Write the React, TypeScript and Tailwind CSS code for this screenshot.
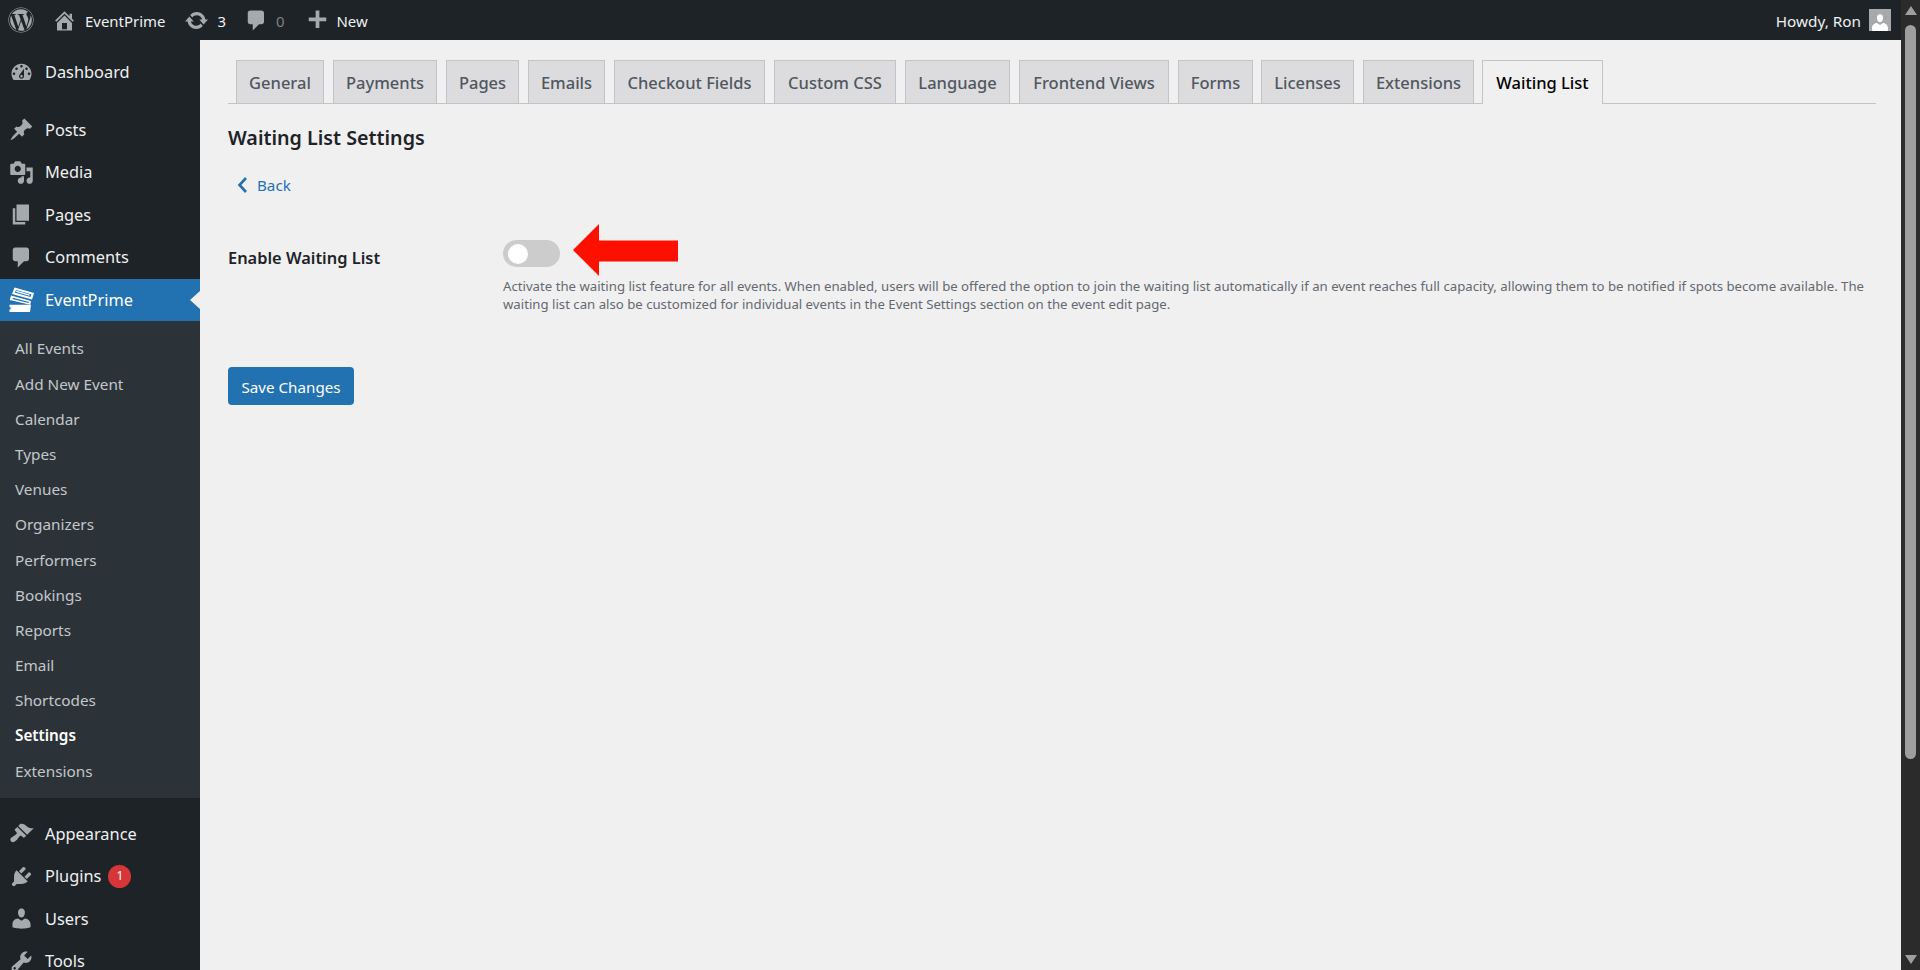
import { FaWordpress } from "react-icons/fa";

const F = "font-['Noto_Sans',sans-serif]";

const P = {
  dashboard: "M3.76 16h12.48c1.1-1.37 1.76-3.11 1.76-5 0-4.42-3.58-8-8-8s-8 3.58-8 8c0 1.89.66 3.63 1.76 5zM10 4c.55 0 1 .45 1 1s-.45 1-1 1-1-.45-1-1 .45-1 1-1zM6 6c.55 0 1 .45 1 1s-.45 1-1 1-1-.45-1-1 .45-1 1-1zm8 0c.55 0 1 .45 1 1s-.45 1-1 1-1-.45-1-1 .45-1 1-1zm-5.37 5.55L12 7v6c0 1.1-.9 2-2 2s-2-.9-2-2c0-.57.24-1.08.63-1.45zM4 10c.55 0 1 .45 1 1s-.45 1-1 1-1-.45-1-1 .45-1 1-1zm12 0c.55 0 1 .45 1 1s-.45 1-1 1-1-.45-1-1 .45-1 1-1zm-5 3c0-.55-.45-1-1-1s-1 .45-1 1 .45 1 1 1 1-.45 1-1z",
  post: "M10.44 3.02l1.82-1.82 6.36 6.35-1.83 1.82c-1.05-.68-2.48-.57-3.41.36l-.75.75c-.92.93-1.04 2.35-.35 3.41l-1.83 1.82-2.41-2.41-2.8 2.79c-.42.42-3.38 2.71-3.8 2.29s1.86-3.39 2.28-3.81l2.79-2.79L4.1 9.36l1.83-1.82c1.05.69 2.48.57 3.4-.36l.75-.75c.93-.92 1.05-2.35.36-3.41z",
  media: "M13 11V4c0-.55-.45-1-1-1h-1.67L9 1H5L3.67 3H2c-.55 0-1 .45-1 1v7c0 .55.45 1 1 1h10c.55 0 1-.45 1-1zM7 4.5c1.38 0 2.5 1.12 2.5 2.5S8.38 9.5 7 9.5 4.5 8.38 4.5 7 5.62 4.5 7 4.5zM14 6h5v10.5c0 1.38-1.12 2.5-2.5 2.5S14 17.88 14 16.5s1.12-2.5 2.5-2.5c.17 0 .34.02.5.05V9h-3V6zm-4 8.05V13h2v3.5c0 1.38-1.12 2.5-2.5 2.5S7 17.88 7 16.5 8.12 14 9.5 14c.17 0 .34.02.5.05z",
  page: "M6 15V2h10v13H6zm-1 1h8v2H3V5h2v11z",
  comment: "M5 2h9c1.1 0 2 .9 2 2v7c0 1.1-.9 2-2 2h-2l-5 5v-5H5c-1.1 0-2-.9-2-2V4c0-1.1.9-2 2-2z",
  appearance: "M14.48 11.06L7.41 3.99l1.5-1.5c.5-.56 2.3-.47 3.51.32 1.21.8 1.43 1.28 2.91 2.1 1.18.64 2.45 1.26 4.45.85zm-.71.71L6.7 4.7 4.93 6.47c-.39.39-.39 1.02 0 1.41l1.06 1.06c.39.39.39 1.03 0 1.42-.6.6-1.43 1.11-2.21 1.69-.35.26-.7.53-1.01.84C1.43 13.23.4 14.98 1.72 16.3c1.33 1.33 3.08.3 4.42-1.05.31-.31.58-.66.84-1.01.58-.78 1.09-1.61 1.69-2.21.39-.39 1.02-.39 1.41 0l1.06 1.06c.39.39 1.02.39 1.41 0z",
  plugin: "M13.11 4.36L9.87 7.6 8 5.73l3.24-3.24c.35-.34 1.05-.2 1.56.32.52.51.66 1.21.31 1.55zm-8 1.77l.91-1.12 9.01 9.01-1.19.84c-.71.71-2.63 1.16-3.82 1.16H6.14L4.9 17.26c-.59.59-1.54.59-2.12 0-.59-.58-.59-1.53 0-2.12l1.24-1.24v-3.88c0-1.13.4-3.19 1.09-3.89zm7.26 3.97l3.24-3.24c.34-.35 1.04-.21 1.55.31.52.51.66 1.21.31 1.55l-3.24 3.25z",
  users: "M10 9.25c-2.27 0-2.73-3.44-2.73-3.44C7 4.02 7.82 2 9.97 2c2.16 0 2.98 2.02 2.71 3.81 0 0-.41 3.44-2.68 3.44zm0 2.57L12.72 10c2.39 0 4.52 2.33 4.52 4.53v2.49s-3.65 1.13-7.24 1.13c-3.65 0-7.24-1.13-7.24-1.13v-2.49c0-2.25 1.94-4.48 4.47-4.48z",
  tools: "M16.68 9.77c-1.34 1.34-3.3 1.67-4.95.99l-5.41 6.52c-.99.99-2.59.99-3.58 0s-.99-2.59 0-3.57l6.52-5.42c-.68-1.65-.35-3.61.99-4.95 1.28-1.28 3.12-1.62 4.72-1.06l-2.89 2.89 2.82 2.82 2.86-2.87c.53 1.58.18 3.39-1.08 4.65zM3.81 16.21c.4.39 1.04.39 1.43 0 .4-.4.4-1.04 0-1.43-.39-.4-1.03-.4-1.43 0-.39.39-.39 1.03 0 1.43z",
  home: "M16 8.5l1.53 1.53-1.06 1.06L10 4.62l-6.47 6.47-1.06-1.06L10 2.5l4 4v-2h2v4zm-6-2.46l6 5.99V18H4v-5.97zM12 17v-5H8v5h4z",
  update: "M10.2 3.28c3.53 0 6.43 2.61 6.92 6h2.08l-3.5 4-3.5-4h2.32c-.45-1.97-2.21-3.45-4.32-3.45-1.45 0-2.73.71-3.54 1.78L4.95 5.66C6.23 4.2 8.11 3.28 10.2 3.28zm-.4 13.44c-3.52 0-6.43-2.61-6.92-6H.8l3.5-4c1.17 1.33 2.33 2.67 3.5 4H5.48c.45 1.97 2.21 3.45 4.32 3.45 1.45 0 2.73-.71 3.54-1.78l1.71 1.95c-1.28 1.46-3.15 2.38-5.25 2.38z",
  plus: "M17 7.5v3h-5.5V16h-3v-5.5H3v-3h5.5V2h3v5.5z",
};

function Dash({ d, className }: { d: string; className: string }) {
  return (
    <svg viewBox="0 0 20 20" className={className} fill="currentColor" aria-hidden="true">
      <path d={d} />
    </svg>
  );
}

function Ticket() {
  return (
    <svg viewBox="0 0 25 25" className="w-[25px] h-[25px] text-white" fill="currentColor" aria-hidden="true">
      <path fillRule="evenodd" d="M5.500 .5 25 6l-2 6.500L3 7zM7 3 6 5.800 21.500 10 22.300 7.300z" />
      <path d="M7.500 3.700 20.800 7.400 20.300 8.800 7 5.100z" />
      <path fillRule="evenodd" d="M2 8.500 22 14l-.8 3.700L.8 13zM4 10.800 3.500 12 19.500 16 20 15z" />
      <path d="M.5 17.800H22L21 25H.5v-2.400c.9-.2 1.300-.7 1.300-1.300S1.400 20.200.5 20z" />
    </svg>
  );
}

const tabs = [
  { label: "General", cls: "w-[88px]" },
  { label: "Payments", cls: "w-[104px]" },
  { label: "Pages", cls: "w-[73px]" },
  { label: "Emails", cls: "w-[77px]" },
  { label: "Checkout Fields", cls: "w-[151px]" },
  { label: "Custom CSS", cls: "w-[122px]" },
  { label: "Language", cls: "w-[105px]" },
  { label: "Frontend Views", cls: "w-[150px]" },
  { label: "Forms", cls: "w-[75px]" },
  { label: "Licenses", cls: "w-[93px] -ml-px" },
  { label: "Extensions", cls: "w-[111px]" },
];

const subs = ["All Events", "Add New Event", "Calendar", "Types", "Venues", "Organizers", "Performers", "Bookings", "Reports", "Email", "Shortcodes", "Settings", "Extensions"];

function MenuItem({ icon, label, badge }: { icon: string; label: string; badge?: string }) {
  return (
    <div className="h-[42.5px] flex items-center shrink-0">
      <div className="w-[45px] flex justify-center pr-[2px]">
        <Dash d={icon} className="w-[25px] h-[25px] text-[#a7aaad]" />
      </div>
      <span className="text-[16.35px] pt-[1px] text-[#f0f0f1]">{label}</span>
      {badge && (
        <span className="ml-[7px] w-[23px] h-[23px] rounded-full bg-[#d63638] text-white text-[12px] flex items-center justify-center">
          {badge}
        </span>
      )}
    </div>
  );
}

export default function App() {
  return (
    <div className={`${F} w-[1920px] h-[970px] overflow-hidden flex bg-[#f0f0f1]`}>
      <div className="flex-1 min-w-0 flex flex-col">
        <header className="h-[40px] shrink-0 bg-[#1d2327] flex items-center text-[14.95px] text-[#f0f0f1]">
          <FaWordpress className="ml-[8px] w-[26px] h-[26px] text-[#a7aaad]" />
          <Dash d={P.home} className="ml-[18px] w-[25px] h-[25px] text-[#a7aaad]" />
          <span className="ml-[8px] pt-[2px]">EventPrime</span>
          <Dash d={P.update} className="ml-[19px] w-[25px] h-[25px] text-[#a7aaad]" />
          <span className="ml-[8px] pt-[2px]">3</span>
          <Dash d={P.comment} className="ml-[18px] w-[25px] h-[25px] text-[#a7aaad]" />
          <span className="ml-[7px] pt-[2px] text-[#a7aaad] opacity-70">0</span>
          <Dash d={P.plus} className="ml-[20px] w-[25px] h-[25px] text-[#a7aaad]" />
          <span className="ml-[7px] pt-[2px]">New</span>
          <span className="ml-auto pt-[2px] text-[15.3px]">Howdy, Ron</span>
          <div className="ml-[8px] mr-[10px] w-[22px] h-[22px] bg-[#a7aaad] overflow-hidden flex items-end justify-center">
            <Dash d={P.users} className="w-[22px] h-[22px] text-white translate-y-[3px]" />
          </div>
        </header>
        <div className="flex-1 min-h-0 flex">
          <aside className="w-[200px] shrink-0 bg-[#1d2327] flex flex-col overflow-hidden pt-[11px]">
            <MenuItem icon={P.dashboard} label="Dashboard" />
            <div className="h-[15px] shrink-0" />
            <MenuItem icon={P.post} label="Posts" />
            <MenuItem icon={P.media} label="Media" />
            <MenuItem icon={P.page} label="Pages" />
            <MenuItem icon={P.comment} label="Comments" />
            <div className="relative h-[42px] shrink-0 bg-[#2271b1] flex items-center">
              <div className="w-[45px] flex justify-center pr-[2px]">
                <Ticket />
              </div>
              <span className="text-[16.35px] pt-[1px] text-white">EventPrime</span>
              <div className="absolute right-0 top-[12px] w-0 h-0 border-y-[9.5px] border-y-transparent border-r-[10px] border-r-[#f0f0f1]" />
            </div>
            <div className="h-[477px] shrink-0 bg-[#2c3338] pt-[10.8px]">
              {subs.map((s) => (
                <div
                  key={s}
                  className={`h-[35.2px] flex items-center pl-[15px] text-[15.3px] ${s === "Settings" ? "font-semibold text-white" : "text-[#c3c7cb]"}`}
                >
                  {s}
                </div>
              ))}
            </div>
            <div className="h-[15px] shrink-0" />
            <MenuItem icon={P.appearance} label="Appearance" />
            <MenuItem icon={P.plugin} label="Plugins" badge="1" />
            <MenuItem icon={P.users} label="Users" />
            <MenuItem icon={P.tools} label="Tools" />
          </aside>
          <main className="flex-1 min-w-0 pt-[20px] pl-[28px] pr-[25px]">
            <div className="h-[44px] flex gap-[9px] pl-[8px] border-b border-[#c3c4c7]">
              {tabs.map((t) => (
                <div
                  key={t.label}
                  className={`${t.cls} h-[43px] shrink-0 flex items-center justify-center bg-[#dcdcde] border border-b-0 border-[#c3c4c7] text-[16.5px] font-medium text-[#50575e] pt-[2px]`}
                >
                  {t.label}
                </div>
              ))}
              <div className="w-[121px] -ml-px h-[44px] shrink-0 flex items-center justify-center bg-[#f0f0f1] border border-b-0 border-[#c3c4c7] text-[16.5px] font-medium text-black pt-[1px]">
                Waiting List
              </div>
            </div>
            <h1 className="mt-[20px] h-[28px] leading-[28px] text-[19.7px] font-semibold text-[#1d2327]">Waiting List Settings</h1>
            <a className="mt-[21px] h-[24px] flex items-center pl-[8px] text-[#2271b1] text-[15.2px]">
              <svg viewBox="0 0 12 18" className="w-[12px] h-[18px]" fill="none" stroke="currentColor" strokeWidth="2.6" aria-hidden="true">
                <path d="M10 2 3.500 9l6.500 7" />
              </svg>
              <span className="ml-[9px]">Back</span>
            </a>
            <div className="mt-[43px] flex">
              <div className="w-[275px] shrink-0 pt-[6px] h-[30px] leading-[24px] text-[16.4px] font-semibold text-[#1d2327]">Enable Waiting List</div>
              <div className="relative flex-1 min-w-0">
                <div className="w-[57px] h-[27px] rounded-full bg-[#ccc] flex items-center pl-[5px]">
                  <div className="w-[20px] h-[20px] rounded-full bg-white" />
                </div>
                <svg viewBox="0 0 105 52" className="absolute left-[70px] top-[-16px] w-[105px] h-[52px]" aria-hidden="true">
                  <path d="M0 26 26 0V16.500L105 16.500V37.500L26 37.500V52z" fill="#fe1000" />
                </svg>
                <p className="mt-[11px] text-[13.2px] leading-[17.6px] text-[#646970]">
                  Activate the waiting list feature for all events. When enabled, users will be offered the option to join the waiting list automatically if an event reaches full capacity, allowing them to be notified if spots become available. The
                  <br />
                  waiting list can also be customized for individual events in the Event Settings section on the event edit page.
                </p>
              </div>
            </div>
            <button className="mt-[53.800px] w-[126px] h-[38px] rounded-[4px] bg-[#2271b1] text-white text-[15.2px] pt-[2px] flex items-center justify-center">
              Save Changes
            </button>
          </main>
        </div>
      </div>
      <div className="w-[19px] shrink-0 bg-[#2b2b2b] flex flex-col items-center">
        <div className="mt-[6px] w-0 h-0 border-x-[6px] border-x-transparent border-b-[9px] border-b-[#9e9e9e]" />
        <div className="mt-[10px] w-[11px] h-[734px] rounded-full bg-[#9e9e9e]" />
        <div className="mt-[196px] w-0 h-0 border-x-[6px] border-x-transparent border-t-[9px] border-t-[#9e9e9e]" />
      </div>
    </div>
  );
}
